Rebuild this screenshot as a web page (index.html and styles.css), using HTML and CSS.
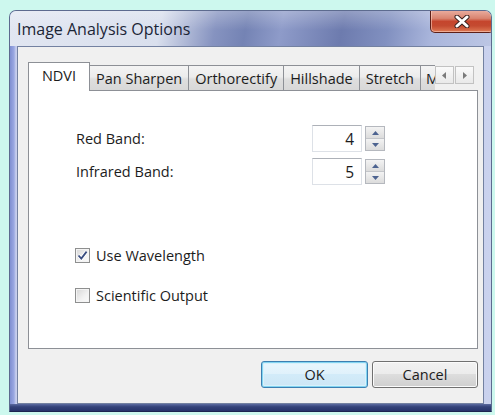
FILE: index.html
```html
<!DOCTYPE html>
<html lang="en">
<head>
<meta charset="utf-8">
<title>Image Analysis Options</title>
<link rel="stylesheet" href="styles.css">
</head>
<body>
<div class="window">
  <div class="titlebar">
    <span class="title">Image Analysis Options</span>
    <button class="close" type="button" aria-label="Close">
      <svg width="16" height="13" viewBox="0 0 16 13">
        <path d="M3 2 L13 11 M13 2 L3 11" stroke="#3b2320" stroke-width="5" stroke-linecap="round" fill="none"/>
        <path d="M3 2 L13 11 M13 2 L3 11" stroke="#ffffff" stroke-width="3" stroke-linecap="round" fill="none"/>
      </svg>
    </button>
  </div>

  <div class="client">
    <div class="tabctl">
      <div class="tabstrip">
        <div class="tab active">NDVI</div>
        <div class="tab">Pan Sharpen</div>
        <div class="tab">Orthorectify</div>
        <div class="tab">Hillshade</div>
        <div class="tab">Stretch</div>
        <div class="tab clipped">Mosaic</div>
        <div class="tabscroll">
          <span class="scrollbtn">
            <svg width="5" height="7" viewBox="0 0 5 7"><path d="M4 0 L0 3.5 L4 7 Z" fill="#7a7a7a"/></svg>
          </span>
          <span class="scrollbtn">
            <svg width="5" height="7" viewBox="0 0 5 7"><path d="M1 0 L5 3.5 L1 7 Z" fill="#7a7a7a"/></svg>
          </span>
        </div>
      </div>

      <div class="pane">
        <div class="field">
          <label class="field-label">Red Band:</label>
          <div class="spin">
            <div class="spin-value">4</div>
            <div class="spin-btns">
              <span class="spin-btn"><svg width="7" height="4" viewBox="0 0 7 4"><path d="M0 4 L3.5 0 L7 4 Z" fill="#4d6390"/></svg></span>
              <span class="spin-btn"><svg width="7" height="4" viewBox="0 0 7 4"><path d="M0 0 L3.5 4 L7 0 Z" fill="#4d6390"/></svg></span>
            </div>
          </div>
        </div>
        <div class="field">
          <label class="field-label">Infrared Band:</label>
          <div class="spin">
            <div class="spin-value">5</div>
            <div class="spin-btns">
              <span class="spin-btn"><svg width="7" height="4" viewBox="0 0 7 4"><path d="M0 4 L3.5 0 L7 4 Z" fill="#4d6390"/></svg></span>
              <span class="spin-btn"><svg width="7" height="4" viewBox="0 0 7 4"><path d="M0 0 L3.5 4 L7 0 Z" fill="#4d6390"/></svg></span>
            </div>
          </div>
        </div>

        <div class="checks">
          <div class="check">
            <span class="box">
              <svg width="11" height="11" viewBox="0 0 11 11"><path d="M1.5 5.5 L4.3 8.6 L9.6 1.6" stroke="#ffffff" stroke-width="3.4" fill="none"/><path d="M1.5 5.5 L4.3 8.6 L9.6 1.6" stroke="#3a4d80" stroke-width="1.8" fill="none"/></svg>
            </span>
            <span class="check-label">Use Wavelength</span>
          </div>
          <div class="check">
            <span class="box"></span>
            <span class="check-label">Scientific Output</span>
          </div>
        </div>
      </div>
    </div>

    <div class="buttons">
      <button class="btn default" type="button">OK</button>
      <button class="btn" type="button">Cancel</button>
    </div>
  </div>
</div>
</body>
</html>
```

FILE: styles.css
```css
* {
  box-sizing: border-box;
}

html,
body {
  margin: 0;
}

body {
  width: 495px;
  height: 415px;
  overflow: hidden;
  background: #cdf8ee;
  font-family: "Open Sans", "Noto Sans", sans-serif;
  font-size: 14.5px;
  color: #1c1c1c;
}

/* Aero-style window frame */
.window {
  margin: 10px 0 0 9px;
  width: 483px;
  height: 402px;
  display: flex;
  flex-direction: column;
  border: 1px solid #5d6b8f;
  border-bottom-color: #1c2550;
  border-radius: 7px 7px 0 0;
  overflow: hidden;
  background:
    linear-gradient(to bottom, #5b6aa0 0, #34437a 40%, #26336a 100%) left bottom / 100% 7px no-repeat,
    linear-gradient(to right, #7f8fd2 0, #9aa8e2 4px, #c9d0ee 6px, #b8c2e8 9px, #b3bee6 60%, #cad2ee 100%);
}

.titlebar {
  height: 35px;
  display: flex;
  align-items: flex-start;
  padding-left: 7px;
  flex-shrink: 0;
  background:
    linear-gradient(to bottom, rgba(255, 255, 255, 0.25) 0, rgba(255, 255, 255, 0) 55%),
    linear-gradient(100deg, #e1e6f1 0, #d9dfed 150px, #8693c0 205px, #7483b4 235px, #8e9bc9 270px, #6d7bae 330px, #8190c0 375px, #aab6dc 420px, #bcc6e4 100%);
}

.title {
  margin-top: 8px;
  line-height: 21px;
  font-size: 16px;
  color: #1b2536;
}

.close {
  margin: -1px -3px 0 auto;
  width: 64px;
  height: 23px;
  padding: 0;
  display: flex;
  align-items: center;
  justify-content: center;
  border: 1px solid #5d1f17;
  border-top: none;
  border-radius: 0 0 5px 5px;
  background: linear-gradient(to bottom, #ebb0a2 0, #d98470 38%, #c5452d 52%, #c44a30 72%, #de7a55 100%);
  box-shadow: inset 0 0 0 1px rgba(255, 215, 200, 0.55);
}

/* client area */
.client {
  flex: 1;
  margin: 0 7px 7px;
  padding: 15px 5px 0 10px;
  display: flex;
  flex-direction: column;
  background: #f0f0f0;
  border: 1px solid #7381a1;
}

.tabctl {
  width: 450px;
  display: flex;
  flex-direction: column;
}

.tabstrip {
  height: 28px;
  display: flex;
  align-items: flex-end;
}

.tab {
  height: 25px;
  padding: 0 6px;
  margin-left: -1px;
  display: flex;
  align-items: center;
  justify-content: center;
  white-space: nowrap;
  border: 1px solid #8d9096;
  border-bottom: none;
  background: linear-gradient(to bottom, #f4f4f4 0, #ececec 45%, #dedede 55%, #d8d8d8 100%);
}

.tab:first-child {
  margin-left: 0;
}

.tab.active {
  position: relative;
  z-index: 1;
  width: 62px;
  height: 29px;
  margin-bottom: -1px;
  padding: 0 0 3px;
  background: #ffffff;
}

.tab.active + .tab {
  border-left: none;
  margin-left: 0;
}

.tab.clipped {
  width: 15px;
  padding: 0 0 0 5px;
  justify-content: flex-start;
  overflow: hidden;
  border-right: none;
}

.tabscroll {
  align-self: flex-start;
  margin-top: 4px;
  display: flex;
  gap: 1px;
}

.scrollbtn {
  width: 19px;
  height: 18px;
  display: flex;
  align-items: center;
  justify-content: center;
  border: 1px solid #c2c2c2;
  background: linear-gradient(to bottom, #fafafa, #e9e9e9);
}

.pane {
  height: 259px;
  padding: 34px 0 0 47px;
  background: #ffffff;
  border: 1px solid #8d9096;
}

.field {
  height: 27px;
  display: flex;
  align-items: center;
  margin-bottom: 6px;
}

.field-label {
  width: 236px;
}

.spin {
  display: flex;
  align-items: center;
  gap: 3px;
}

.spin-value {
  width: 50px;
  height: 27px;
  padding-right: 7px;
  display: flex;
  align-items: center;
  justify-content: flex-end;
  font-size: 15.5px;
  border: 1px solid #dde1e7;
  border-top-color: #adb1b8;
  background: #ffffff;
}

.spin-btns {
  width: 20px;
  height: 25px;
  display: flex;
  flex-direction: column;
  border: 1px solid #b5b8be;
}

.spin-btn {
  flex: 1;
  display: flex;
  align-items: center;
  justify-content: center;
  background: linear-gradient(to bottom, #f3f3f3, #dcdcdc);
}

.spin-btn + .spin-btn {
  border-top: 1px solid #c4c6ca;
}

.checks {
  margin-top: 60px;
  display: flex;
  flex-direction: column;
  gap: 20px;
}

.check {
  height: 20px;
  display: flex;
  align-items: center;
  gap: 6px;
  margin-left: -1px;
}

.box {
  width: 15px;
  height: 15px;
  display: flex;
  align-items: center;
  justify-content: center;
  border: 1px solid #8e8f8f;
  background: linear-gradient(135deg, #d6d6d6 0, #f2f2f2 60%, #fafafa 100%);
  box-shadow: inset 0 0 0 1px #f4f4f4;
}

/* dialog buttons */
.buttons {
  margin-top: 12px;
  width: 450px;
  display: flex;
  justify-content: flex-end;
  gap: 4px;
}

.btn {
  width: 106px;
  height: 27px;
  padding: 0;
  font-family: inherit;
  font-size: 14.5px;
  color: #1c1c1c;
  border: 1px solid #707070;
  border-radius: 3px;
  background: linear-gradient(to bottom, #f2f2f2 0, #ebebeb 50%, #dddddd 50%, #cfcfcf 100%);
  box-shadow: inset 0 0 0 1px #fbfbfb;
}

.btn.default {
  width: 107px;
  border-color: #3c7fb1;
  background: linear-gradient(to bottom, #eaf6fd 0, #dff1fb 50%, #d2ebf9 50%, #cde6f5 100%);
  box-shadow: inset 0 0 0 1px #83d4f1, inset 0 0 0 2px #d8f1fb;
}
```
